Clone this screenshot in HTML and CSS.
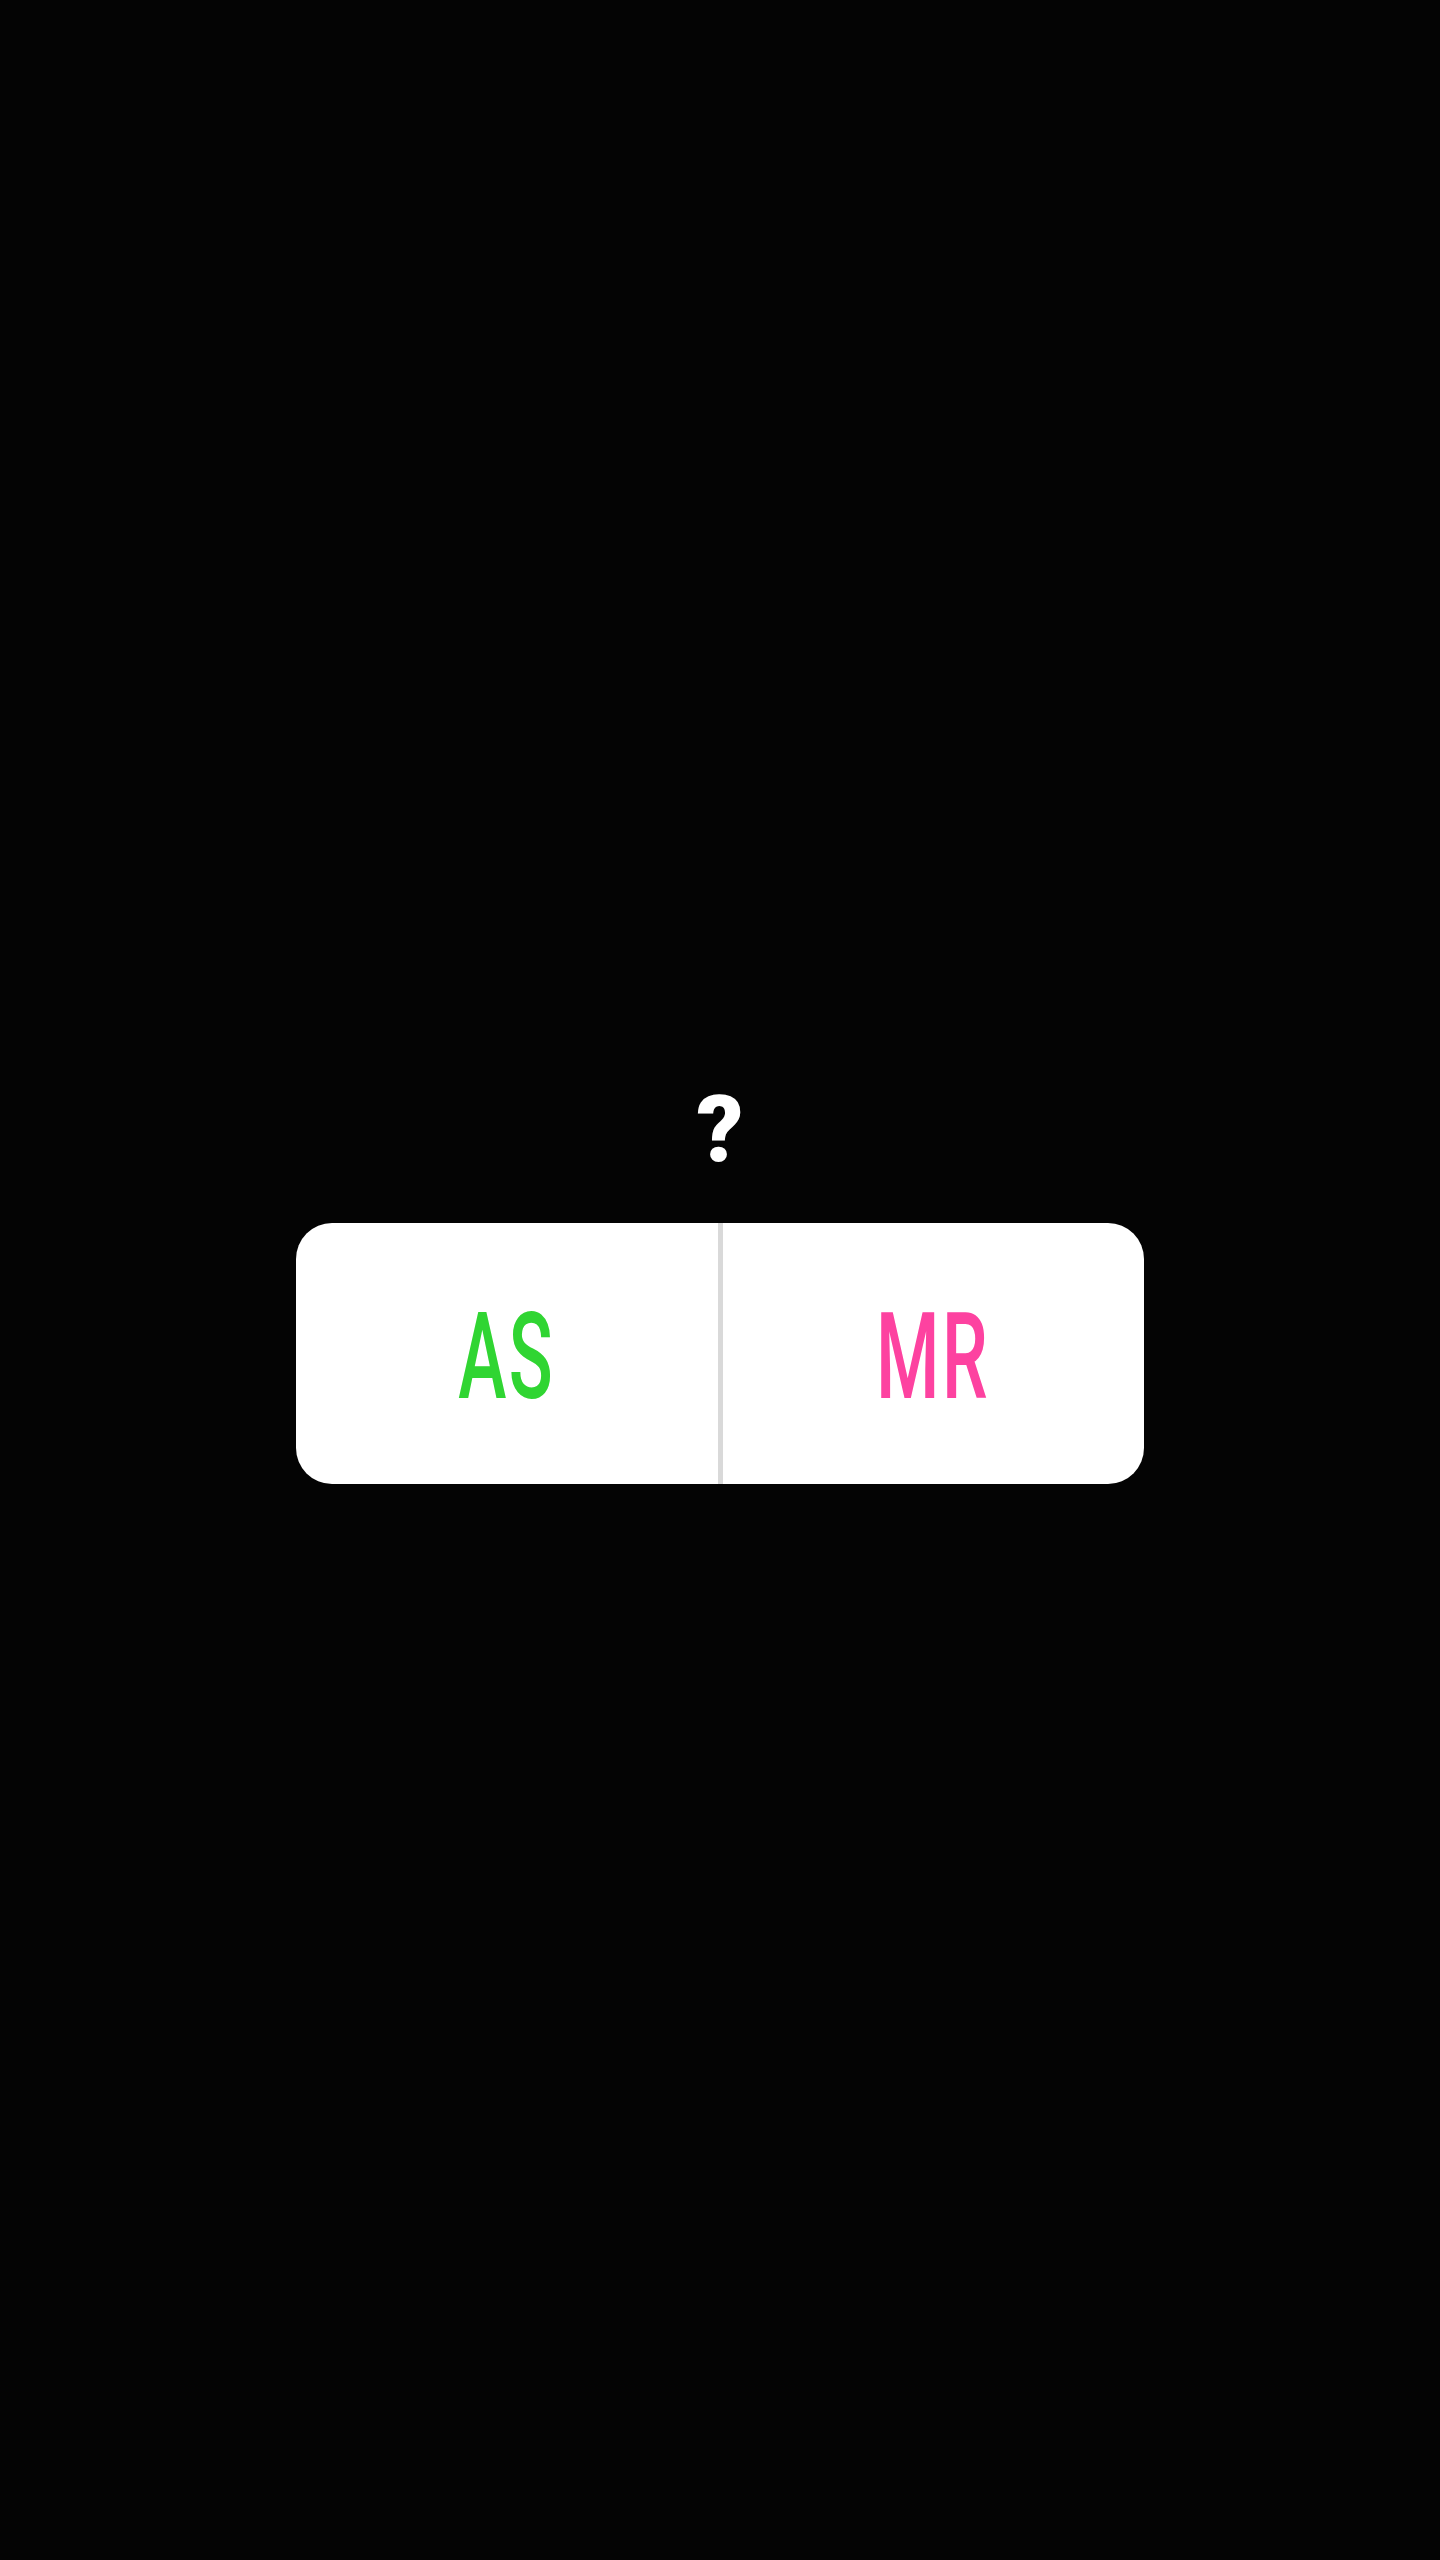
FILE: index.html
```html
<!DOCTYPE html>
<html lang="en">
<head>
<meta charset="utf-8">
<title>Poll</title>
<link rel="stylesheet" href="styles.css">
</head>
<body>
<main class="stage">
  <div class="question">?</div>
  <div class="poll">
    <div class="option"><span class="label label-green">AS</span></div>
    <div class="divider"></div>
    <div class="option"><span class="label label-pink">MR</span></div>
  </div>
</main>
</body>
</html>
```

FILE: styles.css
```css
html, body {
  margin: 0;
  padding: 0;
  background: #040404;
}

.stage {
  height: 2560px;
  display: flex;
  flex-direction: column;
  align-items: center;
  padding-top: 1084px;
  box-sizing: border-box;
  font-family: Roboto, "Liberation Sans", sans-serif;
}

.question {
  color: #ffffff;
  font-size: 92px;
  line-height: 92px;
  font-weight: 900;
}

.poll {
  margin-top: 47px;
  width: 848px;
  height: 261px;
  background: #ffffff;
  border-radius: 36px;
  display: flex;
  overflow: hidden;
}

.option {
  flex: 1;
  display: flex;
  align-items: center;
  justify-content: center;
  padding-top: 7px;
}

.divider {
  width: 5px;
  background: #d9d9d9;
}

.label {
  display: inline-block;
  font-size: 121px;
  line-height: 1;
  font-weight: 500;
  transform: scaleX(0.6);
  letter-spacing: 4px;
}

.label-green {
  color: #30d532;
}

.label-pink {
  color: #fd42a0;
}
```
